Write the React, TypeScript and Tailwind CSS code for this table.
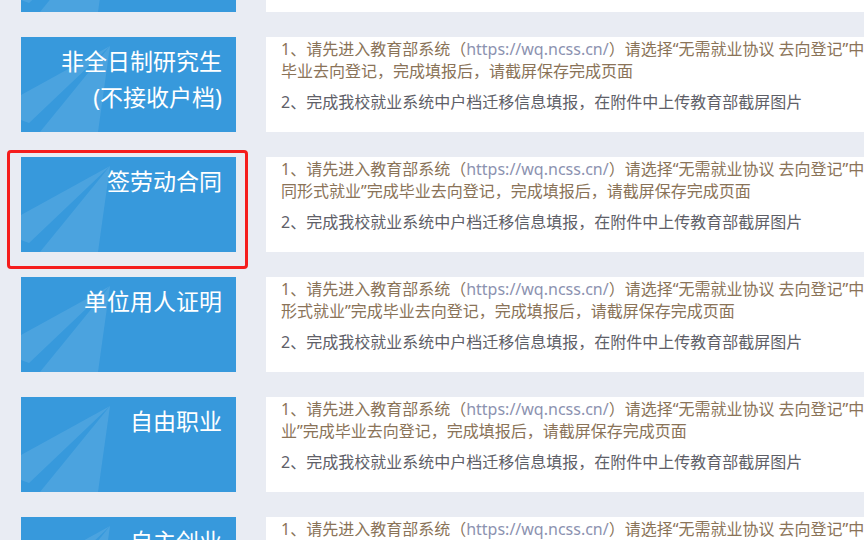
import React from 'react';

type Row = {
  title: string[];
  tail: string;
  line2: string;
  highlight?: boolean;
};

const rows: Row[] = [
  { title: ['定向就业'], tail: '“定向就', line2: '业”完成毕业去向登记，完成填报后，请截屏保存完成页面' },
  { title: ['非全日制研究生', '(不接收户档)'], tail: '非全日制研究生', line2: '毕业去向登记，完成填报后，请截屏保存完成页面' },
  { title: ['签劳动合同'], tail: '“签劳动合', line2: '同形式就业”完成毕业去向登记，完成填报后，请截屏保存完成页面', highlight: true },
  { title: ['单位用人证明'], tail: '“其他录用', line2: '形式就业”完成毕业去向登记，完成填报后，请截屏保存完成页面' },
  { title: ['自由职业'], tail: '“自由职', line2: '业”完成毕业去向登记，完成填报后，请截屏保存完成页面' },
  { title: ['自主创业'], tail: '“自主创', line2: '业”完成毕业去向登记，完成填报后，请截屏保存完成页面' },
];

const font = { fontFamily: '"Noto Sans", "Noto Sans CJK SC", sans-serif' };

function Plane() {
  return (
    <svg className="absolute inset-0 w-full h-full" viewBox="0 0 215 95" preserveAspectRatio="none">
      <polygon points="0,58 89,9 8,86 0,83" fill="#ffffff" fillOpacity="0.1" />
      <polygon points="89,9 19,95 77,95" fill="#ffffff" fillOpacity="0.1" />
    </svg>
  );
}

function Card({ row }: { row: Row }) {
  return (
    <div className="relative w-[215px] h-[95px] shrink-0">
      {row.highlight && (
        <div className="absolute -left-[14px] -top-[7px] w-[241px] h-[119px] border-[3px] border-[#f51d1d] rounded-[4px]" />
      )}
      <div className="relative w-full h-full bg-[#3799dc] overflow-hidden">
        <Plane />
        <div className="relative pt-[6px] pr-[14px] text-right text-white text-[23px] leading-[36px]" style={font}>
          {row.title.map((t) => (
            <div key={t}>{t}</div>
          ))}
        </div>
      </div>
    </div>
  );
}

function Panel({ row }: { row: Row }) {
  return (
    <div className="w-[640px] h-[95px] shrink-0 bg-white pl-[15px] pt-[1px] text-[16px] leading-[22px] whitespace-nowrap" style={font}>
      <div className="text-[#8a7358]">
        <div>
          1、请先进入教育部系统（<span className="text-[#8c92b0]">https://wq.ncss.cn/</span>）请选择“无需就业协议 去向登记”中的{row.tail}
        </div>
        <div>{row.line2}</div>
      </div>
      <div className="mt-[9px] text-[#5e6068]">2、完成我校就业系统中户档迁移信息填报，在附件中上传教育部截屏图片</div>
    </div>
  );
}

export default function App() {
  return (
    <div className="w-[864px] h-[540px] overflow-hidden bg-[#e9ecf3]">
      <div className="-mt-[83px] flex flex-col gap-[25px] pl-[21px]">
        {rows.map((row, i) => (
          <div key={i} className="flex gap-[30px]">
            <Card row={row} />
            <Panel row={row} />
          </div>
        ))}
      </div>
    </div>
  );
}
